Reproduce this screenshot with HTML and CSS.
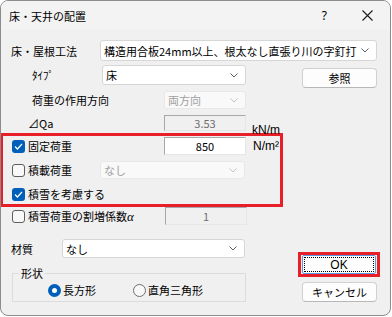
FILE: index.html
```
<html>
    <head>
        <meta charset="utf-8">
        <link rel="stylesheet" href="styles.css">
    </head>
    <body>

    <div class="window">
        <div class="titlebar">
            <span class="title">床・天井の配置</span>
            <span class="help">?</span>
            <span class="close">
                <svg width="11" height="11" viewBox="0 0 11 11"><path d="M0.5 0.5 L10.5 10.5 M10.5 0.5 L0.5 10.5" stroke="#1a1a1a" stroke-width="1.1" fill="none"/></svg>
            </span>
        </div>

        <div class="row row-method">
            <span class="lbl lbl-method">床・屋根工法</span>
            <div class="combo combo-method">
                <span>構造用合板24mm以上、根太なし直張り川の字釘打</span>
                <svg class="chev" width="8" height="5" viewBox="0 0 8 5"><path d="M0.5 0.5 L4 4 L7.5 0.5" stroke="#606060" fill="none"/></svg>
            </div>
        </div>

        <div class="cols">
            <div class="left">
                <div class="row row-type">
                    <span class="lbl lbl-type">ﾀｲﾌﾟ</span>
                    <div class="combo combo-type">
                        <span>床</span>
                        <svg class="chev" width="8" height="5" viewBox="0 0 8 5"><path d="M0.5 0.5 L4 4 L7.5 0.5" stroke="#606060" fill="none"/></svg>
                    </div>
                </div>
                <div class="row row-dir">
                    <span class="lbl lbl-dir">荷重の作用方向</span>
                    <div class="combo combo-small disabled">
                        <span>両方向</span>
                        <svg class="chev" width="8" height="5" viewBox="0 0 8 5"><path d="M0.5 0.5 L4 4 L7.5 0.5" stroke="#c4c4c4" fill="none"/></svg>
                    </div>
                </div>
                <div class="row row-qa">
                    <span class="lbl lbl-qa">⊿Qa</span>
                    <div class="box disabled">3.53</div>
                    <span class="unit unit-low">kN/m</span>
                </div>

                <div class="mark mark-loads">
                    <div class="row row-fixed">
                        <span class="check on"><svg width="9" height="7" viewBox="0 0 9 7"><path d="M1 3.5 L3.4 6 L8 1" stroke="#fff" stroke-width="1.2" fill="none"/></svg></span>
                        <span class="lbl lbl-check">固定荷重</span>
                        <div class="box edit">850</div>
                        <span class="unit">N/m²</span>
                    </div>
                    <div class="row row-live">
                        <span class="check"></span>
                        <span class="lbl lbl-check lbl-live">積載荷重</span>
                        <div class="combo combo-live disabled">
                            <span>なし</span>
                            <svg class="chev" width="8" height="5" viewBox="0 0 8 5"><path d="M0.5 0.5 L4 4 L7.5 0.5" stroke="#c4c4c4" fill="none"/></svg>
                        </div>
                    </div>
                    <div class="row row-snow">
                        <span class="check on"><svg width="9" height="7" viewBox="0 0 9 7"><path d="M1 3.5 L3.4 6 L8 1" stroke="#fff" stroke-width="1.2" fill="none"/></svg></span>
                        <span class="lbl lbl-check">積雪を考慮する</span>
                    </div>
                </div>

                <div class="row row-alpha">
                    <span class="check"></span>
                    <span class="lbl lbl-check lbl-alpha">積雪荷重の割増係数<i class="alpha">α</i></span>
                    <div class="box disabled">1</div>
                </div>

                <div class="row row-material">
                    <span class="lbl lbl-material">材質</span>
                    <div class="combo combo-material">
                        <span>なし</span>
                        <svg class="chev" width="8" height="5" viewBox="0 0 8 5"><path d="M0.5 0.5 L4 4 L7.5 0.5" stroke="#606060" fill="none"/></svg>
                    </div>
                </div>

                <fieldset class="shape">
                    <legend>形状</legend>
                    <div class="radios">
                        <span class="radio on"></span><span class="rlbl">長方形</span>
                        <span class="radio radio-2"></span><span class="rlbl">直角三角形</span>
                    </div>
                </fieldset>
            </div>

            <div class="right">
                <div class="btn btn-ref">参照</div>
                <div class="mark mark-ok">
                    <div class="btn btn-ok"><span class="focus">OK</span></div>
                </div>
                <div class="btn btn-cancel">キャンセル</div>
            </div>
        </div>
    </div>

    </body>
</html>
```

FILE: styles.css
```
body {
    margin: 0;
    background-color: #fff;
    font-family: "Noto Sans CJK JP", "Noto Sans", sans-serif;
    font-size: 11px;
    color: #000;
}

.window {
    width: 391px;
    height: 316px;
    box-sizing: border-box;
    border: 1px solid #8c8c8c;
    border-radius: 8px;
    background-color: #f0f0f0;
    overflow: hidden;
}

.titlebar {
    height: 29px;
    display: flex;
    align-items: center;
    padding-left: 8px;
    background-color: #f3f3f3;
}
.title {
    font-size: 11px;
}
.help {
    margin-left: auto;
    font-family: "Noto Sans", sans-serif;
    font-size: 12px;
}
.close {
    display: flex;
    margin-left: 35px;
    margin-right: 17px;
}

.row {
    display: flex;
    align-items: center;
}
.lbl {
    flex: none;
    white-space: nowrap;
}

.row-method {
    margin-top: 10px;
    height: 21px;
    padding-left: 10px;
}
.lbl-method { width: 89px; }

.combo {
    box-sizing: border-box;
    height: 100%;
    background-color: #fff;
    border: 1px solid #d6d6d6;
    border-radius: 3px;
    display: flex;
    align-items: center;
    padding-left: 3px;
    padding-right: 7px;
}
.combo span {
    flex: 1;
    white-space: nowrap;
    overflow: hidden;
}
.combo .chev {
    flex: none;
}
.combo.disabled {
    background-color: #f9f9f9;
    border-color: #e8e8e8;
    color: #a0a0a0;
}
.combo-method { width: 277px; }

.cols {
    display: flex;
    margin-top: 4px;
}
.left {
    width: 282px;
}
.right {
    width: 82px;
    margin-left: 15px;
    display: flex;
    flex-direction: column;
}

.row-type {
    height: 20px;
    padding-left: 31px;
}
.lbl-type { width: 70px; }
.combo-type { width: 144px; }

.row-dir {
    margin-top: 6px;
    height: 18px;
    padding-left: 31px;
}
.lbl-dir { width: 132px; }
.combo-small { width: 82px; }

.row-qa {
    margin-top: 6px;
    height: 16px;
    padding-left: 27px;
}
.lbl-qa { width: 136px; }

.box {
    box-sizing: border-box;
    width: 82px;
    height: 100%;
    border: 1px solid #a8a8a8;
    border-right-color: #e6e6e6;
    border-bottom-color: #e6e6e6;
    display: flex;
    align-items: center;
    justify-content: center;
}
.box.disabled {
    color: #6d6d6d;
    background-color: #f0f0f0;
}
.box.edit {
    background-color: #fff;
}

.unit {
    margin-left: 7px;
    font-family: "Liberation Sans", sans-serif;
    font-size: 12px;
}
.unit-low {
    align-self: flex-end;
    margin-left: 6px;
    line-height: 14px;
    margin-bottom: -6px;
}

.mark {
    border: 3px solid #e81f28;
}
.mark-loads {
    margin-top: 2px;
    margin-left: -1px;
    width: 277px;
    padding-bottom: 1px;
}

.check {
    flex: none;
    box-sizing: border-box;
    width: 13px;
    height: 13px;
    border: 1px solid #5e5e5e;
    border-radius: 3px;
    background-color: #f8f8f8;
    display: flex;
    align-items: center;
    justify-content: center;
}
.check.on {
    border: none;
    background-color: #005fb8;
}
.lbl-check {
    margin-left: 3px;
}

.row-fixed {
    margin-top: 1px;
    height: 18px;
    padding-left: 9px;
}
.row-fixed .lbl-check { width: 136px; }

.row-live {
    margin-top: 6px;
    height: 18px;
    padding-left: 9px;
}
.lbl-live { width: 72px; }
.combo-live { width: 145px; }

.row-snow {
    margin-top: 6px;
    height: 18px;
    padding-left: 9px;
}

.row-alpha {
    margin-top: 0;
    height: 18px;
    padding-left: 11px;
}
.lbl-alpha { width: 137px; }
.alpha {
    font-family: "Liberation Serif", serif;
    font-size: 13px;
}

.row-material {
    margin-top: 14px;
    height: 19px;
    padding-left: 10px;
}
.lbl-material { width: 51px; }
.combo-material { width: 183px; }

.shape {
    margin: 7px 0 0 11px;
    width: 234px;
    height: 37px;
    box-sizing: border-box;
    border: 1px solid #dcdcdc;
    padding: 0;
}
.shape legend {
    margin-left: 6px;
    padding: 0 2px;
    line-height: 16px;
}
.radios {
    display: flex;
    align-items: center;
    padding-left: 35px;
    margin-top: 1px;
}
.radio {
    flex: none;
    box-sizing: border-box;
    width: 13px;
    height: 13px;
    border-radius: 50%;
    border: 1px solid #6e6e6e;
    background-color: #f8f8f8;
}
.radio.on {
    border: 4px solid #005fb8;
    background-color: #fff;
}
.radio-2 {
    margin-left: 37px;
}
.rlbl {
    margin-left: 2px;
}

.btn {
    box-sizing: border-box;
    background-color: #fdfdfd;
    border: 1px solid #d0d0d0;
    border-bottom-color: #b8b8b8;
    border-radius: 4px;
    display: flex;
    align-items: center;
    justify-content: center;
}
.btn-ref {
    margin-top: 3px;
    margin-left: 4px;
    width: 75px;
    height: 20px;
}
.mark-ok {
    margin-top: 164px;
    height: 25px;
    box-sizing: border-box;
}
.btn-ok {
    margin-left: 1px;
    width: 74px;
    height: 19px;
    border: 1px solid #5a9be0;
    border-radius: 2px;
    padding: 1px;
}
.btn-ok .focus {
    width: 100%;
    height: 100%;
    box-sizing: border-box;
    border: 1px dotted #000;
    display: flex;
    align-items: center;
    justify-content: center;
    font-family: "Liberation Sans", sans-serif;
    font-size: 12px;
}
.btn-cancel {
    margin-top: 5px;
    margin-left: 4px;
    width: 75px;
    height: 20px;
}
```
